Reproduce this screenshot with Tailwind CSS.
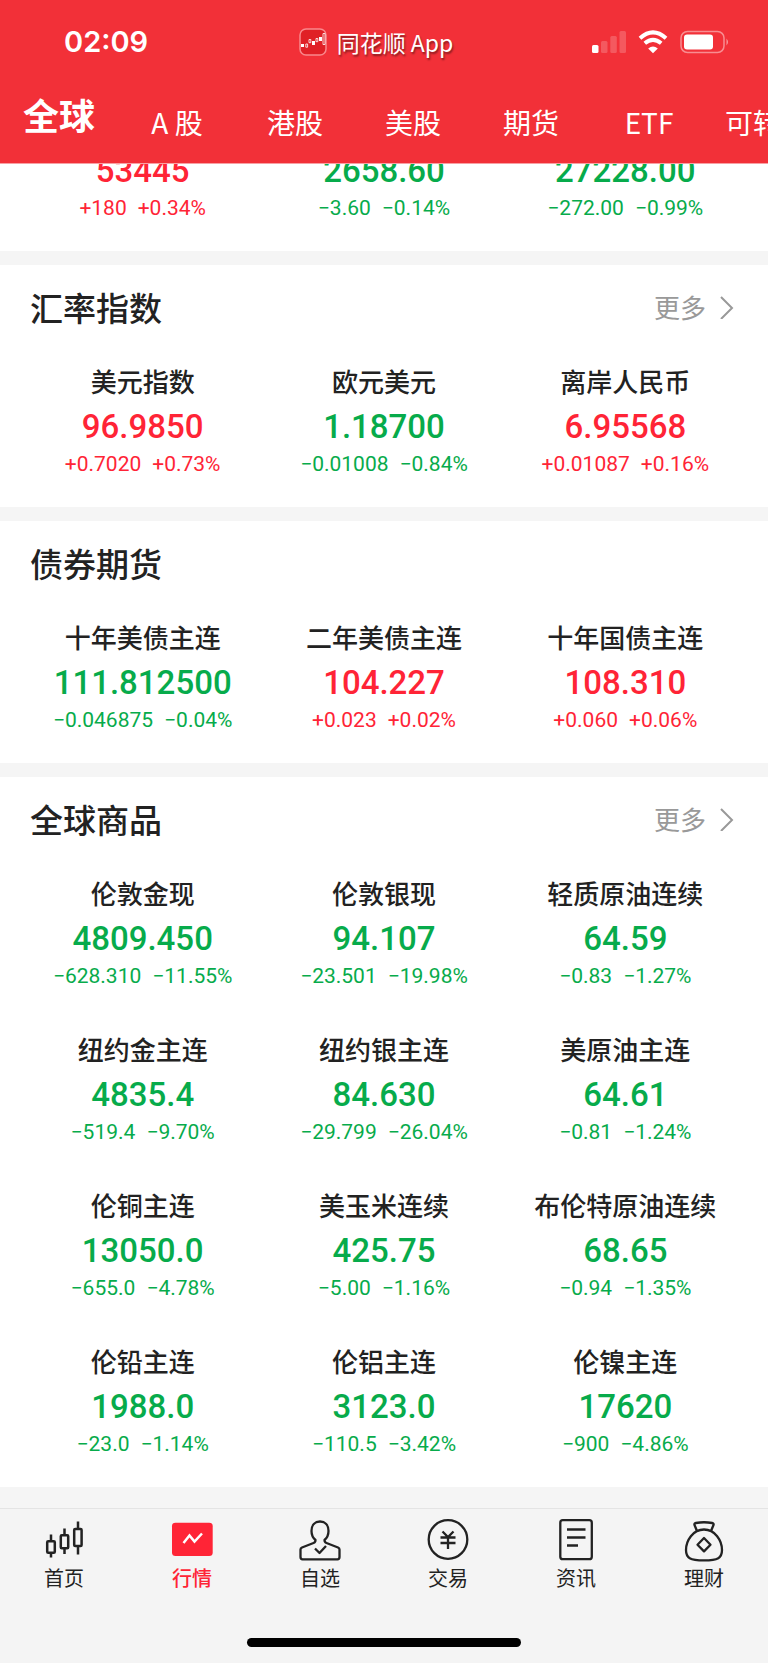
<!DOCTYPE html>
<html lang="zh-CN">
<head>
    <meta charset="UTF-8">
    <meta name="viewport" content="width=device-width, initial-scale=1.0">
    <title>行情 - 全球</title>
    <script src="https://cdn.jsdelivr.net/npm/@tailwindcss/browser@4"></script>
</head>
<body class="bg-[#f5f5f5] min-h-screen flex flex-col text-[#222] font-['Roboto','Noto_Sans_CJK_SC',sans-serif]">
    <!-- Header -->
    <header class="bg-[#f23038] text-white border-b border-[#f8a0a4]">
        <div class="h-20 pt-1 grid grid-cols-3 items-center">
            <div class="pl-16 text-[29px] leading-9 font-semibold font-['Inter',sans-serif]">02:09</div>
            <div class="flex items-center justify-center gap-2.5 pr-4 whitespace-nowrap">
                <svg class="size-7 shrink-0" viewBox="0 0 28 28" fill="none">
                    <rect x="1" y="1" width="26" height="26" rx="6" fill="#e02026" stroke="#f9888c" stroke-width="1.5"/>
                    <path d="M2 16h3v3H2zM13 13h3v4h-3zM20 9h3v4h-3z" fill="#fff"/>
                    <path d="M6.800 16h1.800v3.200H6.800zM10 11.500h1.800v3.200H10zM17 10.500h1.800v3.200H17zM24 5.500h2v11h-2z" stroke="#fff" stroke-width=".8"/>
                </svg>
                <span class="text-[23px] leading-8 text-shadow-[1px_2px_2px_rgb(0_0_0/0.45)] font-['Noto_Sans_CJK_SC',sans-serif]">同花顺 App</span>
            </div>
            <div class="flex items-center justify-end gap-3 pr-[38px]">
                <svg class="w-[34px] h-6" viewBox="0 0 34 24" fill="#fff">
                    <rect x="0" y="15" width="6.500" height="8" rx="1.500"/>
                    <g fill-opacity=".2">
                        <rect x="9" y="11" width="6.500" height="12" rx="1.500"/>
                        <rect x="18.300" y="6" width="6.500" height="17" rx="1.500"/>
                        <rect x="27.500" y="1" width="6.500" height="22" rx="1.500"/>
                    </g>
                </svg>
                <svg class="w-[30px] h-6" viewBox="0 0 30 24" fill="none" stroke="#fff" stroke-width="4">
                    <path d="M2 8.200Q15-3.500 28 8.200"/>
                    <path d="M6.800 13.300Q15 6.500 23.200 13.300"/>
                    <path d="M15 23.300l-4.800-4.800q4.800-3.800 9.600 0z" fill="#fff" stroke="none"/>
                </svg>
                <svg class="w-[50px] h-6" viewBox="0 0 50 24" fill="none">
                    <rect x="1" y="1.500" width="43" height="21" rx="6.500" stroke="#fff" stroke-opacity=".45" stroke-width="1.500"/>
                    <rect x="4" y="4.500" width="29" height="15" rx="3" fill="#fff"/>
                    <path d="M46.500 8.500q3 3.500 0 7z" fill="#fff" fill-opacity=".5"/>
                </svg>
            </div>
        </div>
        <nav class="flex h-[83px] overflow-hidden text-[28px] leading-10 text-center whitespace-nowrap font-['Noto_Sans_CJK_SC',sans-serif]">
            <a href="#" class="w-[118px] shrink-0 pt-2.5 text-4xl leading-[48px] font-bold">全球</a>
            <a href="#" class="w-[118px] shrink-0 pt-[22px]">A 股</a>
            <a href="#" class="w-[118px] shrink-0 pt-[22px]">港股</a>
            <a href="#" class="w-[118px] shrink-0 pt-[22px]">美股</a>
            <a href="#" class="w-[118px] shrink-0 pt-[22px]">期货</a>
            <a href="#" class="w-[118px] shrink-0 pt-[22px]">ETF</a>
            <a href="#" class="w-[118px] shrink-0 pt-[22px]">可转债</a>
        </nav>
    </header>

    <!-- Quotes -->
    <main id="quotes" class="flex flex-col gap-3.5"></main>

    <!-- Tab bar -->
    <footer class="mt-auto h-[155px] bg-[#f4f4f4] border-t border-[#e4e4e4] flex flex-col justify-between items-center pb-4">
        <nav class="w-full grid grid-cols-6 pt-2 text-xl leading-[30px] font-['Noto_Sans_CJK_SC',sans-serif]">
            <a href="#" class="flex flex-col items-center">
                <svg class="size-[46px]" viewBox="0 0 46 46" fill="none" stroke="#222" stroke-width="2.500">
                    <rect x="6.200" y="24.200" width="7.600" height="11.600" rx="1"/>
                    <rect x="19.800" y="18.200" width="7.400" height="13" rx="1"/>
                    <rect x="33.200" y="12" width="7.400" height="17" rx="1"/>
                    <path d="M10 17.500v6.500M10 36v4.500M23.500 11.500V18M23.500 31.500V37M37 4.500V12M37 29v8.500"/>
                </svg>
                首页
            </a>
            <a href="#" class="flex flex-col items-center text-[#ff2436] font-medium">
                <svg class="size-[46px]" viewBox="0 0 46 46" fill="none">
                    <rect x="3" y="5.700" width="40.700" height="33.300" rx="3.500" fill="#ff2436"/>
                    <path d="M14.500 26l6-7.500 5 6 7.500-8" stroke="#fff" stroke-width="2.500"/>
                </svg>
                行情
            </a>
            <a href="#" class="flex flex-col items-center">
                <svg class="size-[46px]" viewBox="0 0 46 46" fill="none" stroke="#222" stroke-width="2.300" stroke-linejoin="round">
                    <path d="M18.500 23c0 2-.5 2.500-2 3L5 30.500c-1 .5-1.500 1-1.500 2V40c0 1.500.7 2.300 2 2.300h35c1.300 0 2-.8 2-2.300v-7.500c0-1-.5-1.500-1.500-2L29.500 26c-1.500-.5-2-1-2-3 3-2.500 4-4.500 4-9 0-6-3.500-9.500-8.500-9.500s-8.500 3.500-8.500 9.500c0 4.500 1 6.500 4 9z"/>
                    <path d="M18 31.500l4.500 4.500 6.500-7"/>
                </svg>
                自选
            </a>
            <a href="#" class="flex flex-col items-center">
                <svg class="size-[46px]" viewBox="0 0 46 46" fill="none" stroke="#222" stroke-width="2.300">
                    <circle cx="23" cy="22.500" r="19.300"/>
                    <path d="M17.500 14.500l5.500 5.500 5.500-5.500M15.500 20.500h15M15.500 26h15M23 20v12"/>
                </svg>
                交易
            </a>
            <a href="#" class="flex flex-col items-center">
                <svg class="size-[46px]" viewBox="0 0 46 46" fill="none" stroke="#222" stroke-width="2.300">
                    <rect x="7.300" y="3.200" width="31.500" height="39" rx="2.500"/>
                    <path d="M14 12.500h18.500M14 20.500h18.500M14 28.500h11"/>
                </svg>
                资讯
            </a>
            <a href="#" class="flex flex-col items-center">
                <svg class="size-[46px]" viewBox="0 0 46 46" fill="none" stroke="#222" stroke-width="2.300" stroke-linejoin="round">
                    <path d="M16 14l-2.500-6c-.4-1.200.2-1.800 1.300-2 5-.9 11.400-.9 16.400 0 1.100.2 1.700.8 1.300 2L30 14"/>
                    <path d="M23 12.500c-11 0-18 11-18 20.500 0 8 4 10.300 18 10.300s18-2.300 18-10.300c0-9.500-7-20.500-18-20.500z"/>
                    <path d="M23 21l6.500 6.700-6.500 6.700-6.500-6.700z"/>
                </svg>
                理财
            </a>
        </nav>
        <div class="w-[274px] h-[9px] rounded-full bg-black"></div>
    </footer>

    <script>
        // rows: [name, price, change, percent]
        const sections = [
            { rows: [
                ['', '53445', '+180', '+0.34%'],
                ['', '2658.60', '−3.60', '−0.14%'],
                ['', '27228.00', '−272.00', '−0.99%']
            ] },
            { title: '汇率指数', more: true, rows: [
                ['美元指数', '96.9850', '+0.7020', '+0.73%'],
                ['欧元美元', '1.18700', '−0.01008', '−0.84%'],
                ['离岸人民币', '6.95568', '+0.01087', '+0.16%']
            ] },
            { title: '债券期货', rows: [
                ['十年美债主连', '111.812500', '−0.046875', '−0.04%'],
                ['二年美债主连', '104.227', '+0.023', '+0.02%'],
                ['十年国债主连', '108.310', '+0.060', '+0.06%']
            ] },
            { title: '全球商品', more: true, rows: [
                ['伦敦金现', '4809.450', '−628.310', '−11.55%'],
                ['伦敦银现', '94.107', '−23.501', '−19.98%'],
                ['轻质原油连续', '64.59', '−0.83', '−1.27%'],
                ['纽约金主连', '4835.4', '−519.4', '−9.70%'],
                ['纽约银主连', '84.630', '−29.799', '−26.04%'],
                ['美原油主连', '64.61', '−0.81', '−1.24%'],
                ['伦铜主连', '13050.0', '−655.0', '−4.78%'],
                ['美玉米连续', '425.75', '−5.00', '−1.16%'],
                ['布伦特原油连续', '68.65', '−0.94', '−1.35%'],
                ['伦铅主连', '1988.0', '−23.0', '−1.14%'],
                ['伦铝主连', '3123.0', '−110.5', '−3.42%'],
                ['伦镍主连', '17620', '−900', '−4.86%']
            ] }
        ];

        function renderQuote([name, price, change, percent]) {
            const color = change.startsWith('+') ? 'text-[#ff2436]' : 'text-[#07ab4b]';
            return `
                <div class="pt-3.5 pb-7 text-center whitespace-nowrap">
                    ${name ? `<h3 class="text-[26px] leading-8 mb-2 font-medium font-['Noto_Sans_CJK_SC',sans-serif]">${name}</h3>` : ''}
                    <p class="text-[33px] leading-[44px] font-medium ${color}">${price}</p>
                    <p class="flex justify-center gap-[11px] text-[21px] leading-[30px] ${color}"><span>${change}</span><span>${percent}</span></p>
                </div>`;
        }

        function renderSection(section) {
            // the first block is partly scrolled under the header
            if (!section.title) {
                return `
                    <section class="bg-white px-[22px] h-[87px] overflow-hidden flex flex-col justify-end">
                        <div class="grid grid-cols-3">${section.rows.map(renderQuote).join('')}</div>
                    </section>`;
            }
            return `
                <section class="bg-white">
                    <div class="h-[86px] pb-0.5 pl-[30px] pr-[34px] flex justify-between items-center font-['Noto_Sans_CJK_SC',sans-serif]">
                        <h2 class="text-[33px] leading-10 font-medium">${section.title}</h2>
                        ${section.more ? `
                        <a href="#" class="flex items-center gap-3 text-[26px] leading-8 text-[#999]">更多
                            <svg class="w-4 h-6" viewBox="0 0 16 24" fill="none" stroke="#999" stroke-width="2"><path d="M3 2L14 13 3 24"/></svg>
                        </a>` : ''}
                    </div>
                    <div class="px-[22px] grid grid-cols-3">${section.rows.map(renderQuote).join('')}</div>
                </section>`;
        }

        document.getElementById('quotes').innerHTML = sections.map(renderSection).join('');
    </script>
</body>
</html>
